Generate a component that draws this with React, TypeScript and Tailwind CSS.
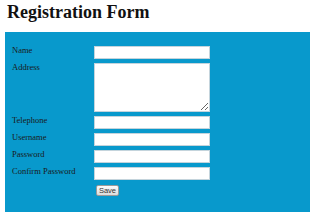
export default function App() {
  const rows = ["Telephone", "Username", "Password", "Confirm Password"];

  return (
    <div className="w-[330px] h-[220px] bg-white overflow-hidden font-['Liberation_Serif',serif]">
      <h1 className="pl-[7px] pt-[1px] text-[18px] leading-[22px] font-bold text-[#111]">Registration Form</h1>
      <div className="ml-[5px] mt-[9px] w-[305px] h-[180px] bg-[#0899cc] pl-[7px] pt-[14px]">
        <div className="flex flex-col gap-[4px]">
          <div className="flex">
            <label className="w-[82px] text-[8.5px] leading-[8px] text-[#1a1a1a]">Name</label>
            <input type="text" className="w-[116px] h-[13px] bg-white border border-[#c4d4dc]" />
          </div>
          <div className="flex">
            <label className="w-[82px] text-[8.5px] leading-[8px] text-[#1a1a1a]">Address</label>
            <textarea className="w-[116px] h-[49px] bg-white border border-[#c4d4dc] resize" />
          </div>
          {rows.map((r) => (
            <div key={r} className="flex">
              <label className="w-[82px] text-[8.5px] leading-[8px] text-[#1a1a1a]">{r}</label>
              <input
                type={r.includes("Password") ? "password" : "text"}
                className="w-[116px] h-[13px] bg-white border border-[#c4d4dc]"
              />
            </div>
          ))}
          <div className="flex mt-[1px]">
            <div className="w-[84px]" />
            <button className="w-[23px] h-[11px] flex items-center justify-center rounded-[2px] border border-[#9a9a9a] bg-gradient-to-b from-[#fbfbfb] to-[#dcdcdc] text-[7.5px] leading-none text-[#333] font-['Liberation_Sans',sans-serif]">
              Save
            </button>
          </div>
        </div>
      </div>
    </div>
  );
}
